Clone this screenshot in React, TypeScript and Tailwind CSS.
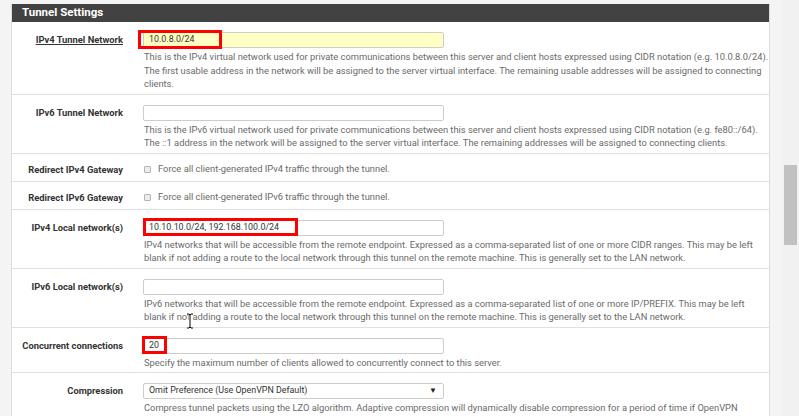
import React from "react";

type Row = {
  label: string;
  underline?: boolean;
  kind: "input" | "checkbox" | "select";
  value?: string;
  yellow?: boolean;
  mark?: string;
  help: string[];
};

const rows: Row[] = [
  {
    label: "IPv4 Tunnel Network",
    underline: true,
    kind: "input",
    value: "10.0.8.0/24",
    yellow: true,
    mark: "left-[-5px] top-[-2px] w-[84px] h-[19px]",
    help: [
      "This is the IPv4 virtual network used for private communications between this server and client hosts expressed using CIDR notation (e.g. 10.0.8.0/24).",
      "The first usable address in the network will be assigned to the server virtual interface. The remaining usable addresses will be assigned to connecting",
      "clients.",
    ],
  },
  {
    label: "IPv6 Tunnel Network",
    kind: "input",
    help: [
      "This is the IPv6 virtual network used for private communications between this server and client hosts expressed using CIDR notation (e.g. fe80::/64).",
      "The ::1 address in the network will be assigned to the server virtual interface. The remaining addresses will be assigned to connecting clients.",
    ],
  },
  {
    label: "Redirect IPv4 Gateway",
    kind: "checkbox",
    help: ["Force all client-generated IPv4 traffic through the tunnel."],
  },
  {
    label: "Redirect IPv6 Gateway",
    kind: "checkbox",
    help: ["Force all client-generated IPv6 traffic through the tunnel."],
  },
  {
    label: "IPv4 Local network(s)",
    kind: "input",
    value: "10.10.10.0/24, 192.168.100.0/24",
    mark: "left-[0px] top-[-2px] w-[155px] h-[18px]",
    help: [
      "IPv4 networks that will be accessible from the remote endpoint. Expressed as a comma-separated list of one or more CIDR ranges. This may be left",
      "blank if not adding a route to the local network through this tunnel on the remote machine. This is generally set to the LAN network.",
    ],
  },
  {
    label: "IPv6 Local network(s)",
    kind: "input",
    help: [
      "IPv6 networks that will be accessible from the remote endpoint. Expressed as a comma-separated list of one or more IP/PREFIX. This may be left",
      "blank if not adding a route to the local network through this tunnel on the remote machine. This is generally set to the LAN network.",
    ],
  },
  {
    label: "Concurrent connections",
    kind: "input",
    value: "20",
    mark: "left-[-1px] top-[-2px] w-[25px] h-[18px]",
    help: ["Specify the maximum number of clients allowed to concurrently connect to this server."],
  },
  {
    label: "Compression",
    kind: "select",
    value: "Omit Preference (Use OpenVPN Default)",
    help: [
      "Compress tunnel packets using the LZO algorithm. Adaptive compression will dynamically disable compression for a period of time if OpenVPN",
    ],
  },
];

const Field = ({ r }: { r: Row }) => {
  if (r.kind === "checkbox") {
    return (
      <div className="flex items-center h-[16px] pl-[1px] gap-[7px] text-[9.35px] text-[#6a6a6a]">
        <span className="w-[7px] h-[7px] border border-[#b5b5b5] bg-[#ececec] rounded-[1px]" />
        <span>{r.help[0]}</span>
      </div>
    );
  }
  return (
    <div>
      <div className="relative w-[301px] h-[16px]">
        <div
          className={`w-full h-full border border-[#cccccc] rounded-[2px] flex items-center justify-between pl-[5px] pr-[6px] text-[8.9px] text-[#333] ${
            r.yellow ? "bg-[#ffffc4]" : "bg-white"
          }`}
        >
          <span>{r.value}</span>
          {r.kind === "select" && <span className="text-[8px] text-[#222]">▼</span>}
        </div>
        {r.mark && <div className={`absolute border-[3px] border-[#ff0000] ${r.mark}`} />}
      </div>
      <div className="mt-[2px] pl-[1px] text-[9.35px] leading-[13.5px] text-[#6a6a6a] whitespace-nowrap">
        {r.help.map((h, i) => (
          <div key={i}>{h}</div>
        ))}
      </div>
    </div>
  );
};

export default function App() {
  return (
    <div
      className="flex w-[799px] h-[416px] overflow-hidden bg-[#f4f4f4]"
      style={{ fontFamily: "Roboto, 'Liberation Sans', sans-serif" }}
    >
      <div className="flex-1 pl-[11px] pr-[12px] pt-[4px]">
        <div className="relative bg-white border-x border-[#dcdcdc]">
          {/* Header */}
          <div className="h-[18px] bg-[#424242] flex items-center pl-[10px] text-white font-bold text-[11.5px]">
            Tunnel Settings
          </div>

          {/* Rows */}
          {rows.map((r) => (
            <div
              key={r.label}
              className={`flex gap-[20px] border-b border-[#e1e1e1] ${
                r.kind === "checkbox" ? "pt-[8px] pb-[3px]" : "pt-[10px] pb-[3px]"
              }`}
            >
              <div className="w-[111px] text-right text-[9.35px] leading-[16px] font-bold text-[#333] whitespace-nowrap">
                <span className={r.underline ? "underline" : ""}>{r.label}</span>
              </div>
              <Field r={r} />
            </div>
          ))}

          {/* text cursor */}
          <svg className="absolute left-[174px] top-[309px]" width="8" height="16" viewBox="0 0 8 16">
            <path d="M1 1h2l1 1 1-1h2M4 2v12M1 15h2l1-1 1 1h2" stroke="#fff" strokeWidth="2.5" fill="none" />
            <path d="M1 1h2l1 1 1-1h2M4 2v12M1 15h2l1-1 1 1h2" stroke="#000" strokeWidth="1" fill="none" />
          </svg>
        </div>
      </div>

      {/* Scrollbar */}
      <div className="w-[17px] h-full bg-[#f1f1f1] pt-[165px] px-[2px]">
        <div className="h-[80px] bg-[#c1c1c1]" />
      </div>
    </div>
  );
}
